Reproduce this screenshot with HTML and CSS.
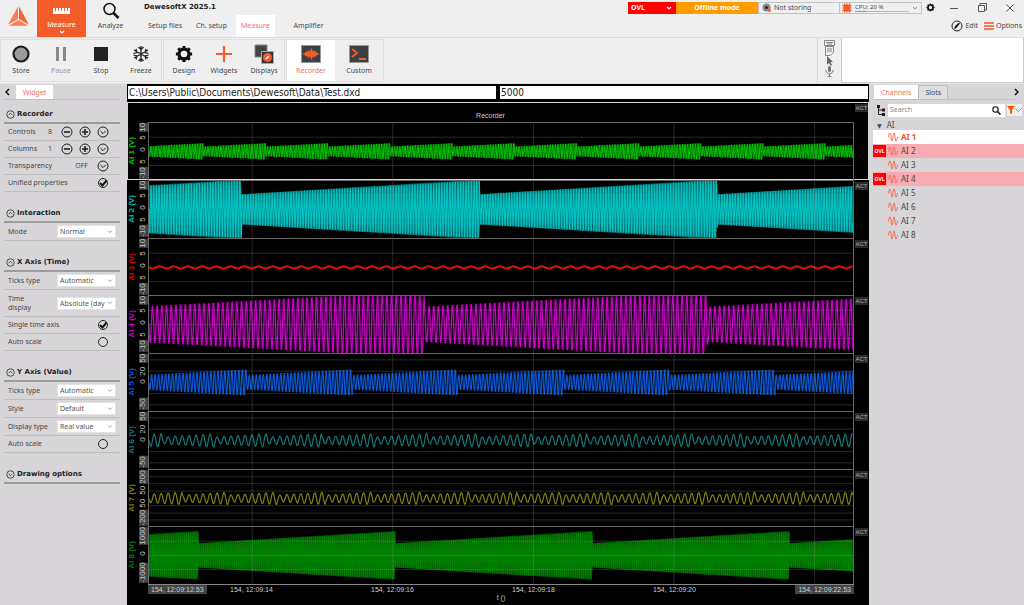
FILE: index.html
```html
<!DOCTYPE html>
<html lang="en">
<head>
    <meta charset="UTF-8">
    <meta name="viewport" content="width=device-width, initial-scale=1.0">
    <title>DewesoftX 2025.1</title>
    <link rel="stylesheet" href="styles.css">
</head>
<body>
    <!-- shared icons -->
    <svg class="sprite" width="0" height="0" aria-hidden="true">
        <symbol id="i-minus" viewBox="0 0 12 12"><circle cx="6" cy="6" r="5"/><path d="M3 6h6" stroke-width="1.6"/></symbol>
        <symbol id="i-plus" viewBox="0 0 12 12"><circle cx="6" cy="6" r="5"/><path d="M3 6h6M6 3v6" stroke-width="1.6"/></symbol>
        <symbol id="i-down" viewBox="0 0 12 12"><circle cx="6" cy="6" r="5"/><path d="M3.4 5l2.6 2.6L8.600 5"/></symbol>
        <symbol id="i-up" viewBox="0 0 12 12"><circle cx="6" cy="6" r="5"/><path d="M3.400 7L6 4.400 8.600 7"/></symbol>
        <symbol id="i-wave" viewBox="0 0 10 10"><path d="M.5 5.500C1 0 2.500-1 3 5s1.500 5 2 0 1.500-6 2 0 1.500 5 2.500 0"/></symbol>
        <symbol id="i-gear" viewBox="0 0 20 20"><circle cx="10" cy="10" r="5.500" fill="none" stroke="#111" stroke-width="3.600"/><path d="M10 1v3M10 16v3M1 10h3M16 10h3M3.600 3.600l2.200 2.200M14.200 14.200l2.200 2.200M3.600 16.400l2.200-2.200M14.200 5.800l2.200-2.200" stroke="#111" stroke-width="3.400"/></symbol>
    </svg>

    <header class="header">
        <svg class="logo" viewBox="0 0 24 22">
            <path d="M11.500 0v13L1 19z" fill="#ff7a52"/>
            <path d="M12.500 0v13L23 19z" fill="#f9602f"/>
            <path d="M12 14l10 6H2z" fill="#ff7a52"/>
        </svg>
        <button class="mode active">
            <svg width="17" height="8" viewBox="0 0 17 8"><path d="M0 1h17v6H0z" fill="#fff"/><path d="M2.500 1v3M5.500 1v3M8.500 1v3M11.500 1v3M14.500 1v3" stroke="#f25c2a"/></svg>
            <span>Measure</span>
            <svg class="mode-arrow" width="6" height="4" viewBox="0 0 6 4"><path d="M1 1l2 2 2-2" fill="none" stroke="#fff" stroke-width="1.200"/></svg>
        </button>
        <button class="mode">
            <svg width="18" height="18" viewBox="0 0 18 18" fill="none" stroke="#111"><circle cx="7.500" cy="7" r="5.500" stroke-width="1.500"/><path d="M11.500 11l5 5" stroke-width="2.600"/></svg>
            <span>Analyze</span>
        </button>
        <div class="title-area">
            <h1>DewesoftX 2025.1</h1>
            <nav class="menu">
                <a href="#">Setup files</a>
                <a href="#">Ch. setup</a>
                <a href="#" class="active">Measure</a>
                <a href="#" class="amplifier">Amplifier</a>
            </nav>
        </div>
        <div class="header-right">
            <div class="status">
                <button class="ovl">OVL <svg width="6" height="4" viewBox="0 0 6 4"><path d="M1 1l2 2 2-2" fill="none" stroke="#fff" stroke-width="1.200"/></svg></button>
                <div class="offline">Offline mode</div>
                <div class="storing"><svg width="9" height="9" viewBox="0 0 9 9"><circle cx="4.500" cy="4.500" r="4" fill="#888"/><circle cx="4.500" cy="4.500" r="1.500" fill="#222"/><circle cx="7.500" cy="7.500" r="1.500" fill="#f25c2a"/></svg>Not storing</div>
                <div class="cpu">
                    <svg width="10" height="10" viewBox="0 0 10 10"><path d="M1.500 1.500h7v7h-7z" fill="#f25c2a"/><path d="M2.500 0v10M5 0v10M7.500 0v10M0 2.500h10M0 5h10M0 7.500h10" stroke="#f25c2a" stroke-width=".8"/></svg>
                    <div class="cpu-text">CPU: 20 %<div class="bar"><i></i></div></div>
                    <svg width="6" height="4" viewBox="0 0 6 4"><path d="M1 1l2 2 2-2" fill="none" stroke="#777" stroke-width=".8"/></svg>
                </div>
                <button class="win gear" aria-label="Settings"><svg width="9" height="9"><use href="#i-gear"/></svg></button>
                <button class="win" aria-label="Minimize"><svg width="8" height="8" viewBox="0 0 8 8"><path d="M0 4.500h8"/></svg></button>
                <button class="win" aria-label="Restore"><svg width="9" height="9" viewBox="0 0 9 9"><path d="M.5 2.500h6v6h-6zM2 2V.5h6.500V7H7"/></svg></button>
                <button class="win" aria-label="Close"><svg width="8" height="8" viewBox="0 0 8 8"><path d="M.5.5l7 7M7.500.5l-7 7"/></svg></button>
            </div>
            <div class="links">
                <a href="#"><svg width="12" height="12" viewBox="0 0 12 12"><circle cx="6" cy="6" r="5" fill="none" stroke="#222"/><path d="M3 9l1-3 4-3.500 1 1L5.500 8z" fill="#222"/></svg>Edit</a>
                <a href="#"><svg width="10" height="8" viewBox="0 0 10 8"><path d="M0 1h10M0 4h10M0 7h10" stroke="#f25c2a" stroke-width="1.400"/></svg>Options</a>
            </div>
        </div>
    </header>

    <div class="toolbar">
        <div class="group">
            <button class="tool"><svg viewBox="0 0 20 20"><circle cx="10" cy="10" r="7.500" fill="#999" stroke="#1c1c1c" stroke-width="2.200"/></svg>Store</button>
            <button class="tool muted"><svg viewBox="0 0 20 20"><path d="M5 3h3v14H5zM12 3h3v14h-3z" fill="#888"/></svg>Pause</button>
            <button class="tool"><svg viewBox="0 0 20 20"><path d="M3 3h14v14H3z" fill="#222"/></svg>Stop</button>
            <button class="tool"><svg viewBox="0 0 20 20" fill="none" stroke="#222" stroke-width="1.300"><path d="M10 2v16M3 6l14 8M3 14l14-8M7.500 3l2.500 2.500L12.500 3M7.500 17l2.500-2.500 2.500 2.500M2.500 9.500L6 8.500 5 5M17.500 9.500L14 8.500 15 5M2.500 11L6 12l-1 3.500M17.500 11L14 12l1 3.500"/></svg>Freeze</button>
        </div>
        <div class="group">
            <button class="tool"><svg viewBox="0 0 20 20"><use href="#i-gear" x="1" y="1" width="18" height="18"/></svg>Design</button>
            <button class="tool"><svg viewBox="0 0 20 20"><path d="M10 2v16M2 10h16" stroke="#f25c2a" stroke-width="2.200"/></svg>Widgets</button>
            <button class="tool"><svg viewBox="0 0 20 20"><path d="M1 1h12v12H1z" fill="#444" stroke="#888"/><path d="M7.500 7.500h12v12h-12z" fill="#333" stroke="#aaa"/><circle cx="13.500" cy="13.500" r="4.500" fill="#f25c2a"/><path d="M11.500 15.500l1-2.500 3-1.500-1.500 3z" fill="#fff"/></svg>Displays</button>
        </div>
        <div class="group wide">
            <button class="tool active"><svg viewBox="0 0 20 20"><path d="M.5 1.500h19v17H.5z" fill="#3c3f44" stroke="#999"/><path d="M1.500 10l3-1.500L5.500 7l1 1 1-2.500 1 2 1-1 1-3 1 4 1-2 1 2.500 1-1.500 1 2 3 1.500-3 1.500-1 2-1-1.500-1 2.500-1-2-1 4-1-3-1-1-1 2-1-2.500-1 1-1-1.500z" fill="#f25c2a"/></svg>Recorder</button>
            <button class="tool"><svg viewBox="0 0 20 20"><path d="M.5 1.500h19v17H.5z" fill="#3c3f44" stroke="#999"/><path d="M3 5l5 4-5 4M10 15h7" fill="none" stroke="#f25c2a" stroke-width="2"/></svg>Custom</button>
        </div>
        <div class="tool-icons">
            <svg width="11" height="6" viewBox="0 0 11 6"><path d="M.5.500h10v5H.5zM2 2.500h7M3 4h5" fill="none" stroke="#888"/></svg>
            <svg width="9" height="10" viewBox="0 0 9 10"><path d="M.5.500h8v6l-3 3h-5zM2 3h5M2 5h5" fill="none" stroke="#888"/></svg>
            <svg width="8" height="10" viewBox="0 0 8 10"><path d="M1 0l6 6H4.500L6 9l-1.500.8L3.200 7 1 8.500z" fill="#666"/></svg>
            <svg width="9" height="11" viewBox="0 0 9 11"><rect x="3" y="0" width="3" height="6" rx="1.500" fill="#777"/><path d="M1 4c0 5 7 5 7 0M4.500 8v2M2.500 10.400h4" fill="none" stroke="#777"/></svg>
        </div>
        <div class="preview"></div>
    </div>

    <main class="main">
        <aside class="props">
            <div class="tabs">
                <button class="nav-arrow" aria-label="Back"><svg width="5" height="8" viewBox="0 0 5 8"><path d="M4 1L1 4l3 3"/></svg></button>
                <button class="tab active">Widget</button>
            </div>
            <h2><svg class="ico"><use href="#i-up"/></svg>Recorder</h2>
            <div class="row"><span>Controls</span><output>8</output>
                <button aria-label="Fewer controls"><svg class="ico"><use href="#i-minus"/></svg></button><button aria-label="More controls"><svg class="ico"><use href="#i-plus"/></svg></button><button aria-label="Choose controls"><svg class="ico"><use href="#i-down"/></svg></button></div>
            <div class="row"><span>Columns</span><output>1</output>
                <button aria-label="Fewer columns"><svg class="ico"><use href="#i-minus"/></svg></button><button aria-label="More columns"><svg class="ico"><use href="#i-plus"/></svg></button><button aria-label="Choose columns"><svg class="ico"><use href="#i-down"/></svg></button></div>
            <div class="row"><span>Transparency</span><output>OFF</output><button aria-label="Choose transparency"><svg class="ico"><use href="#i-down"/></svg></button></div>
            <div class="row"><label for="unified">Unified properties</label><input type="checkbox" id="unified" checked></div>

            <h2><svg class="ico"><use href="#i-up"/></svg>Interaction</h2>
            <div class="row tall"><label for="mode">Mode</label><select id="mode"><option>Normal</option></select></div>

            <h2><svg class="ico"><use href="#i-up"/></svg>X Axis (Time)</h2>
            <div class="row tall"><label for="x-ticks">Ticks type</label><select id="x-ticks"><option>Automatic</option></select></div>
            <div class="row double"><label for="time-display">Time<br>display</label><select id="time-display"><option>Absolute (day)</option></select></div>
            <div class="row"><label for="single">Single time axis</label><input type="checkbox" id="single" checked></div>
            <div class="row"><label for="x-auto">Auto scale</label><input type="checkbox" id="x-auto"></div>

            <h2><svg class="ico"><use href="#i-up"/></svg>Y Axis (Value)</h2>
            <div class="row tall"><label for="y-ticks">Ticks type</label><select id="y-ticks"><option>Automatic</option></select></div>
            <div class="row tall"><label for="y-style">Style</label><select id="y-style"><option>Default</option></select></div>
            <div class="row tall"><label for="y-display">Display type</label><select id="y-display"><option>Real value</option></select></div>
            <div class="row"><label for="y-auto">Auto scale</label><input type="checkbox" id="y-auto"></div>

            <h2><svg class="ico"><use href="#i-down"/></svg>Drawing options</h2>
        </aside>

        <section class="center">
            <div class="fields">
                <input type="text" aria-label="Data file" value="C:\Users\Public\Documents\Dewesoft\Data\Test.dxd">
                <input type="text" aria-label="Sample rate" value="5000">
            </div>
            <div class="recorder">
                <div class="selected" id="selected">
                    <div class="recorder-title"><span>Recorder</span><b class="act">ACT</b></div>
                </div>
            </div>
            <div class="axis">
                <span class="edge">154, 12:09:12.53</span>
                <span>154, 12:09:14</span>
                <span>154, 12:09:16</span>
                <span>154, 12:09:18</span>
                <span>154, 12:09:20</span>
                <span class="edge end">154, 12:09:22.53</span>
            </div>
            <div class="axis-name">t ()</div>
        </section>

        <aside class="channels">
            <div class="tabs">
                <button class="tab active">Channels</button>
                <button class="tab">Slots</button>
                <button class="nav-arrow" aria-label="Next"><svg width="5" height="8" viewBox="0 0 5 8"><path d="M1 1l3 3-3 3"/></svg></button>
            </div>
            <div class="search">
                <svg width="9" height="11" viewBox="0 0 9 11"><path d="M1.500 1v8.500H6M1.500 5H6" fill="none" stroke="#222"/><path d="M0 0h3v3H0zM5 3.500h3v3H5zM5 8h3v3H5z" fill="#222"/></svg>
                <div class="search-box">
                    <input type="search" aria-label="Search" placeholder="Search">
                    <svg width="9" height="9" viewBox="0 0 9 9" fill="none" stroke="#111"><circle cx="3.500" cy="3.500" r="2.700" stroke-width="1.100"/><path d="M5.500 5.500l3 3" stroke-width="1.500"/></svg>
                </div>
                <button class="filter" aria-label="Filter"><svg width="8" height="8" viewBox="0 0 8 8"><path d="M0 0h8L5 4v4L3 7V4z" fill="#ff5500"/></svg><svg width="7" height="4" viewBox="0 0 7 4"><path d="M.5.500l3 3 3-3" fill="none" stroke="#999"/></svg></button>
            </div>
            <div class="tree-head"><span>▼</span>AI</div>
            <ul class="list">
                <li class="current"><svg class="wave"><use href="#i-wave"/></svg>AI 1</li>
                <li class="over"><b>OVL</b><svg class="wave"><use href="#i-wave"/></svg>AI 2</li>
                <li><svg class="wave"><use href="#i-wave"/></svg>AI 3</li>
                <li class="over"><b>OVL</b><svg class="wave"><use href="#i-wave"/></svg>AI 4</li>
                <li><svg class="wave"><use href="#i-wave"/></svg>AI 5</li>
                <li><svg class="wave"><use href="#i-wave"/></svg>AI 6</li>
                <li><svg class="wave"><use href="#i-wave"/></svg>AI 7</li>
                <li><svg class="wave"><use href="#i-wave"/></svg>AI 8</li>
            </ul>
        </aside>
    </main>
    <script src="script.js"></script>
</body>
</html>
```
FILE: styles.css
```css
* {
    box-sizing: border-box;
}
body {
    margin: 0;
    min-height: 100vh;
    display: flex;
    flex-direction: column;
    background: #efefef;
    color: #484848;
    font: 7px/10px "Noto Sans", sans-serif;
}
button {
    font: inherit;
    color: inherit;
    background: none;
    border: none;
    padding: 0;
    cursor: pointer;
}
a {
    color: inherit;
    text-decoration: none;
}
svg {
    display: block;
    flex: none;
}
.sprite {
    position: absolute;
}

/* header */
.header {
    display: flex;
    height: 37px;
}
.logo {
    width: 23px;
    height: 22px;
    margin: 6px 7px;
}
.mode {
    width: 49px;
    display: flex;
    flex-direction: column;
    align-items: center;
    padding-top: 2px;
}
.mode svg {
    margin-bottom: 1px;
}
.mode.active {
    background: #f25c2a;
    color: #fff;
    padding-top: 7px;
}
.mode.active svg {
    margin-bottom: 5px;
}
.mode.active .mode-arrow {
    margin: 0;
}
.title-area {
    padding-left: 9px;
}
.title-area h1 {
    margin: 0;
    font: bold 7px/14px "DejaVu Sans", sans-serif;
    color: #222;
}
.menu {
    display: flex;
    padding-top: 1px;
}
.menu a {
    padding: 0 5px;
    line-height: 22px;
}
.menu a:first-child {
    padding-left: 4px;
    padding-right: 9px;
}
.menu .active {
    background: #fff;
    color: #f0705a;
    margin-left: 4px;
}
.menu .amplifier {
    margin-left: 14px;
}
.header-right {
    margin-left: auto;
    width: 396px;
}
.status {
    display: flex;
    align-items: center;
    height: 14px;
    padding-top: 1px;
}
.ovl, .offline, .storing, .cpu {
    height: 12px;
    display: flex;
    align-items: center;
}
.ovl {
    width: 48px;
    background: #f00;
    color: #fff;
    font-weight: bold;
    justify-content: space-between;
    padding: 0 4px 0 3px;
}
.offline {
    width: 82px;
    background: #ff9c00;
    color: #fff;
    font-weight: bold;
    justify-content: center;
}
.storing, .cpu {
    width: 82px;
    border: 1px solid #c4c4c4;
    gap: 3px;
    padding-left: 3px;
}
.cpu {
    border-left: none;
    padding: 0 3px 0 2px;
    font-size: 6px;
    line-height: 7px;
}
.cpu-text {
    flex: 1;
}
.bar {
    height: 1px;
    background: #bbb;
}
.bar i {
    display: block;
    width: 20%;
    height: 1px;
    background: #6cc020;
}
.win {
    width: 28px;
    display: flex;
    justify-content: center;
}
.win.gear {
    width: 16px;
    margin-right: 2px;
}
.win path {
    fill: none;
    stroke: #555;
}
.links {
    display: flex;
    justify-content: flex-end;
    gap: 6px;
    padding: 6px 2px 0;
}
.links a {
    display: flex;
    align-items: center;
    gap: 2px;
}

/* toolbar */
.toolbar {
    display: flex;
    height: 47px;
    border-top: 1px solid #dcdcdc;
    border-bottom: 1px solid #e4e4e4;
}
.group {
    display: flex;
    margin: 1px 1px 1px 0;
    border: 1px solid #e0e0e0;
}
.tool {
    width: 40px;
    display: flex;
    flex-direction: column;
    align-items: center;
    padding-top: 4px;
}
.tool svg {
    width: 20px;
    height: 20px;
    margin-bottom: 2px;
}
.wide .tool {
    width: 48px;
}
.tool.muted {
    color: #999;
}
.tool.active {
    background: #fff;
    color: #f0705a;
}
.tool-icons {
    margin-left: auto;
    width: 24px;
    border-left: 1px solid #d6d6d6;
    display: flex;
    flex-direction: column;
    align-items: center;
    padding-top: 2px;
}
.preview {
    width: 183px;
    background: #fff;
    border: 1px solid #ccc;
    border-top: none;
}

/* main layout */
.main {
    flex: 1;
    display: grid;
    grid-template-columns: 127px 1fr 155px;
}
.props, .channels {
    background: #d7d5d8;
}
.props {
    padding: 0 7px 0 4px;
}
.tabs {
    display: flex;
    height: 16px;
    border-bottom: 1px solid #bfbfbf;
    padding-top: 1px;
}
.props .tabs {
    margin-bottom: 6px;
}
.tab {
    padding: 0 6px;
    border: 1px solid #bbb;
    border-bottom: none;
    background: #dedede;
}
.tab.active {
    background: #fff;
    color: #f0705a;
    border-color: #fff;
}
.nav-arrow {
    width: 12px;
    padding-left: 1px;
}
.nav-arrow path {
    fill: none;
    stroke: #111;
    stroke-width: 1.5;
}
.props h2 {
    display: flex;
    align-items: center;
    gap: 2px;
    height: 18px;
    margin: 13px 0 0;
    padding-left: 2px;
    border-bottom: 2px solid #9c9c9c;
    font: bold 7px/10px "DejaVu Sans", sans-serif;
    color: #222;
}
.tabs + h2 {
    margin-top: 0;
}
.ico {
    width: 12px;
    height: 12px;
    fill: none;
    stroke: #222;
}
.props h2 .ico {
    width: 9px;
    height: 9px;
}
.row {
    display: flex;
    align-items: center;
    gap: 6px;
    height: 17px;
    padding: 0 11px 0 4px;
    border-bottom: 1px solid #bdbdbd;
}
.row.tall {
    height: 18px;
}
.row.double {
    height: 27px;
    line-height: 9px;
}
.row span, .row label {
    flex: 1;
}
.row output {
    margin-right: 3px;
}
.row select {
    appearance: none;
    width: 59px;
    height: 13px;
    margin-right: -7px;
    padding: 0 10px 0 2px;
    border: 1px solid #e4e4e4;
    border-radius: 0;
    background: #fff url("data:image/svg+xml,%3Csvg xmlns='http://www.w3.org/2000/svg' width='6' height='4'%3E%3Cpath d='M1 .5l2 2 2-2' fill='none' stroke='%23888' stroke-width='.8'/%3E%3C/svg%3E") no-repeat right 2px center;
    color: #555;
    font: 7px/11px "Noto Sans", sans-serif;
}
.row input {
    appearance: none;
    width: 10px;
    height: 10px;
    margin: 0 1px;
    border: 1px solid #222;
    border-radius: 50%;
}
.row input:checked {
    background: url("data:image/svg+xml,%3Csvg xmlns='http://www.w3.org/2000/svg' width='8' height='8'%3E%3Cpath d='M1 4l2.500 2.500L8 1' fill='none' stroke='%23111' stroke-width='2'/%3E%3C/svg%3E") no-repeat center;
}

/* recorder */
.center {
    background: #000;
    display: flex;
    flex-direction: column;
    min-width: 0;
}
.fields {
    display: grid;
    grid-template-columns: 1fr 1fr;
    gap: 4px;
    padding: 2px 1px;
    border-bottom: 1px solid #000;
}
.fields input {
    width: 100%;
    min-width: 0;
    height: 13px;
    padding: 0 1px;
    border: none;
    background: #fff;
    color: #222;
    font: 10px/13px "DejaVu Sans Condensed", "DejaVu Sans", sans-serif;
}
.recorder {
    flex: 1;
    display: flex;
    flex-direction: column;
    font-family: "Liberation Sans", sans-serif;
}
.selected {
    flex: 1 1 20px;
    display: flex;
    flex-direction: column;
    box-shadow: inset 0 0 0 1px #d8d8d8;
}
.recorder-title {
    height: 20px;
    display: flex;
    justify-content: flex-end;
    color: #ccc;
}
.recorder-title span {
    flex: 1;
    text-align: center;
    padding-top: 9px;
}
.recorder-title .act {
    width: 13px;
}
.track {
    flex: 1 1 0;
    min-height: 0;
    display: grid;
    grid-template-columns: 12px 9px minmax(0, 1fr) 15px;
    grid-template-rows: 100%;
}
.name, .scale {
    writing-mode: vertical-rl;
    transform: rotate(180deg);
}
.name {
    font-size: 8px;
    font-weight: bold;
    line-height: 9px;
    text-align: center;
}
/* tick columns run from the bottom of the track to the top */
.scale {
    display: grid;
    grid-template-columns: 7fr 15fr 14fr 15fr 7fr;
    justify-items: center;
    color: #c8c8c8;
    font-size: 8px;
    line-height: 8px;
    padding: 1px 0;
}
.scale.fifty {
    grid-template-columns: 23fr 12fr 11fr 12fr;
}
.scale.two-hundred {
    grid-template-columns: 14fr 15fr 15fr 14fr;
}
.scale.thousand {
    grid-template-columns: 1fr 1fr 1fr;
}
.scale span:first-child, .scale span:last-child {
    background: #444;
}
.scale span:first-child {
    justify-self: start;
}
.scale span:last-child {
    justify-self: end;
}
.plot {
    width: 100%;
    height: 100%;
    border: 1px solid #666;
    border-bottom: none;
}
.grid {
    fill: none;
    stroke: #8c8c8c;
    stroke-opacity: .3;
}
.signal {
    fill: none;
    stroke-linejoin: round;
}
.act {
    align-self: start;
    margin: 2px 1px 0;
    background: #2a2a2a;
    color: #aaa;
    font-size: 6px;
    line-height: 8px;
    font-weight: normal;
    text-align: center;
}
.axis {
    display: grid;
    grid-template-columns: minmax(0, 33fr) repeat(4, minmax(0, 141fr)) minmax(0, 109fr);
    justify-items: center;
    margin: 0 15px 0 21px;
    border-top: 1px solid #888;
    color: #d0d0d0;
    font: 7px/9px "Liberation Sans", sans-serif;
    white-space: nowrap;
}
.axis .edge {
    justify-self: start;
    background: #444;
    padding: 0 3px;
}
.axis .end {
    justify-self: end;
}
.axis-name {
    margin: 0 15px 0 21px;
    height: 11px;
    color: #c8c8c8;
    text-align: center;
    font: 7px/8px "Liberation Sans", sans-serif;
}

/* channels */
.channels .tabs {
    margin: 0 9px 0 5px;
}
.channels .nav-arrow {
    margin-left: auto;
    margin-right: -10px;
}
.search {
    display: flex;
    align-items: center;
    gap: 2px;
    height: 20px;
    padding: 0 3px 0 8px;
}
.search-box {
    flex: 1;
    display: flex;
    align-items: center;
    height: 13px;
    background: #fff;
    padding-right: 4px;
}
.search-box input {
    flex: 1;
    min-width: 0;
    border: none;
    background: none;
    padding: 0 2px;
    font: inherit;
}
.search-box input::placeholder {
    color: #888;
}
.filter {
    width: 24px;
    height: 12px;
    background: #eee;
    display: flex;
    align-items: center;
    justify-content: space-around;
}
.tree-head {
    height: 10px;
    padding-left: 8px;
    font-size: 8px;
    line-height: 9px;
}
.tree-head span {
    margin-right: 5px;
    font-family: "DejaVu Sans", sans-serif;
    font-size: 6px;
}
.list {
    list-style: none;
    margin: 0;
    padding: 0 0 0 4px;
    font-size: 8px;
}
.list li {
    display: flex;
    align-items: center;
    gap: 3px;
    height: 14px;
    padding-left: 15px;
}
.list .current {
    background: #fff;
    color: #f0502a;
    font-weight: bold;
}
.list .over {
    background: #f8abb0;
    padding-left: 0;
}
.list b {
    width: 13px;
    margin-right: -1px;
    background: #f00;
    color: #fff;
    font-size: 5px;
    line-height: 12px;
    text-align: center;
}
.wave {
    width: 10px;
    height: 10px;
    fill: none;
    stroke: #f0705a;
}
```
FILE: script.js
```js
const volts = { ticks: ["-10", "5", "0", "5", "10"], lines: [-14.5, 0, 14.5], scale: "" };
const fifty = { ticks: ["-50", "0", "20", "50"], lines: [-23, -11.5, 11.5, 23], scale: "fifty" };

// reset = first drop of the envelope, saw = distance between drops, low/high = amplitude
// body = opacity of the filled envelope under the line
const channels = [
    { name: "AI 1", color: "#00c800", period: 2.6, reset: 55, saw: 62.3, low: 5, high: 8.5, width: 1, body: .3, ...volts },
    { name: "AI 2", color: "#00c0c0", period: 2.7, reset: 93, saw: 238.5, low: 15.5, high: 30.5, width: 1.2, body: .5, ...volts },
    { name: "AI 3", color: "#e00000", period: 14.2, reset: 0, saw: 900, low: 1.3, high: 1.3, width: 1.8, body: 0, ...volts },
    { name: "AI 4", color: "#c800c8", period: 4.7, reset: 276, saw: 284, low: 18.5, high: 35, width: 1.2, body: .15, ...volts },
    { name: "AI 5", color: "#0a5ad8", period: 3.5, reset: 98, saw: 106, low: 7.5, high: 13.5, width: 1.1, body: .15, ...fifty },
    { name: "AI 6", color: "#127878", period: 7, reset: 13, saw: 53.3, low: 3.5, high: 7, width: 1.2, body: 0, ...fifty },
    { name: "AI 7", color: "#808008", period: 7, reset: 33, saw: 48, low: 3.5, high: 6.5, width: 1.2, body: 0, ticks: ["-200", "50", "50", "200"], lines: [-22, -15, -7.5, 7.5, 15, 22], scale: "two-hundred" },
    { name: "AI 8", color: "#008000", period: 1.9, reset: 49.5, saw: 197.5, low: 12.5, high: 25, width: 1.1, body: .5, ticks: ["-1000", "0", "1000"], lines: [-14.5, 0, 14.5], scale: "thousand" }
];

function amplitude(ch, x) {
    const phase = (((x - ch.reset) % ch.saw + ch.saw) % ch.saw) / ch.saw;
    return ch.low + (ch.high - ch.low) * phase;
}

function clip(y) {
    return Math.max(-29, Math.min(29, y));
}

function signalPath(ch) {
    const points = [];
    for (let x = 0; x <= 706; x += ch.period / 10) {
        const y = amplitude(ch, x) * Math.sin(2 * Math.PI * x / ch.period);
        points.push(x.toFixed(2) + " " + clip(y).toFixed(2));
    }
    return "M" + points.join("L");
}

function bodyPath(ch) {
    const top = [];
    const bottom = [];
    for (let x = 0; x <= 706; x++) {
        const a = clip(amplitude(ch, x)).toFixed(1);
        top.push(x + " -" + a);
        bottom.unshift(x + " " + a);
    }
    return "M" + top.concat(bottom).join("L") + "Z";
}

function gridPath(ch) {
    let d = "";
    ch.lines.forEach(y => d += "M0 " + y + "H706");
    for (let x = 103.5; x < 706; x += 141) {
        d += "M" + x + " -29V29";
    }
    return d;
}

channels.forEach((ch, i) => {
    const track = document.createElement("div");
    track.className = "track";
    track.innerHTML = `
        <div class="name" style="color: ${ch.color}">${ch.name} (V)</div>
        <div class="scale ${ch.scale}">${ch.ticks.map(t => `<span>${t}</span>`).join("")}</div>
        <svg class="plot" viewBox="0 -29 706 58" preserveAspectRatio="none">
            ${ch.body ? `<path d="${bodyPath(ch)}" fill="${ch.color}" fill-opacity="${ch.body}"/>` : ""}
            <path class="signal" d="${signalPath(ch)}" stroke="${ch.color}" stroke-width="${ch.width}"/>
            <path class="grid" d="${gridPath(ch)}"/>
        </svg>
        ${i > 0 ? '<b class="act">ACT</b>' : ""}`;
    const parent = i === 0 ? document.getElementById("selected") : document.querySelector(".recorder");
    parent.appendChild(track);
});
```
